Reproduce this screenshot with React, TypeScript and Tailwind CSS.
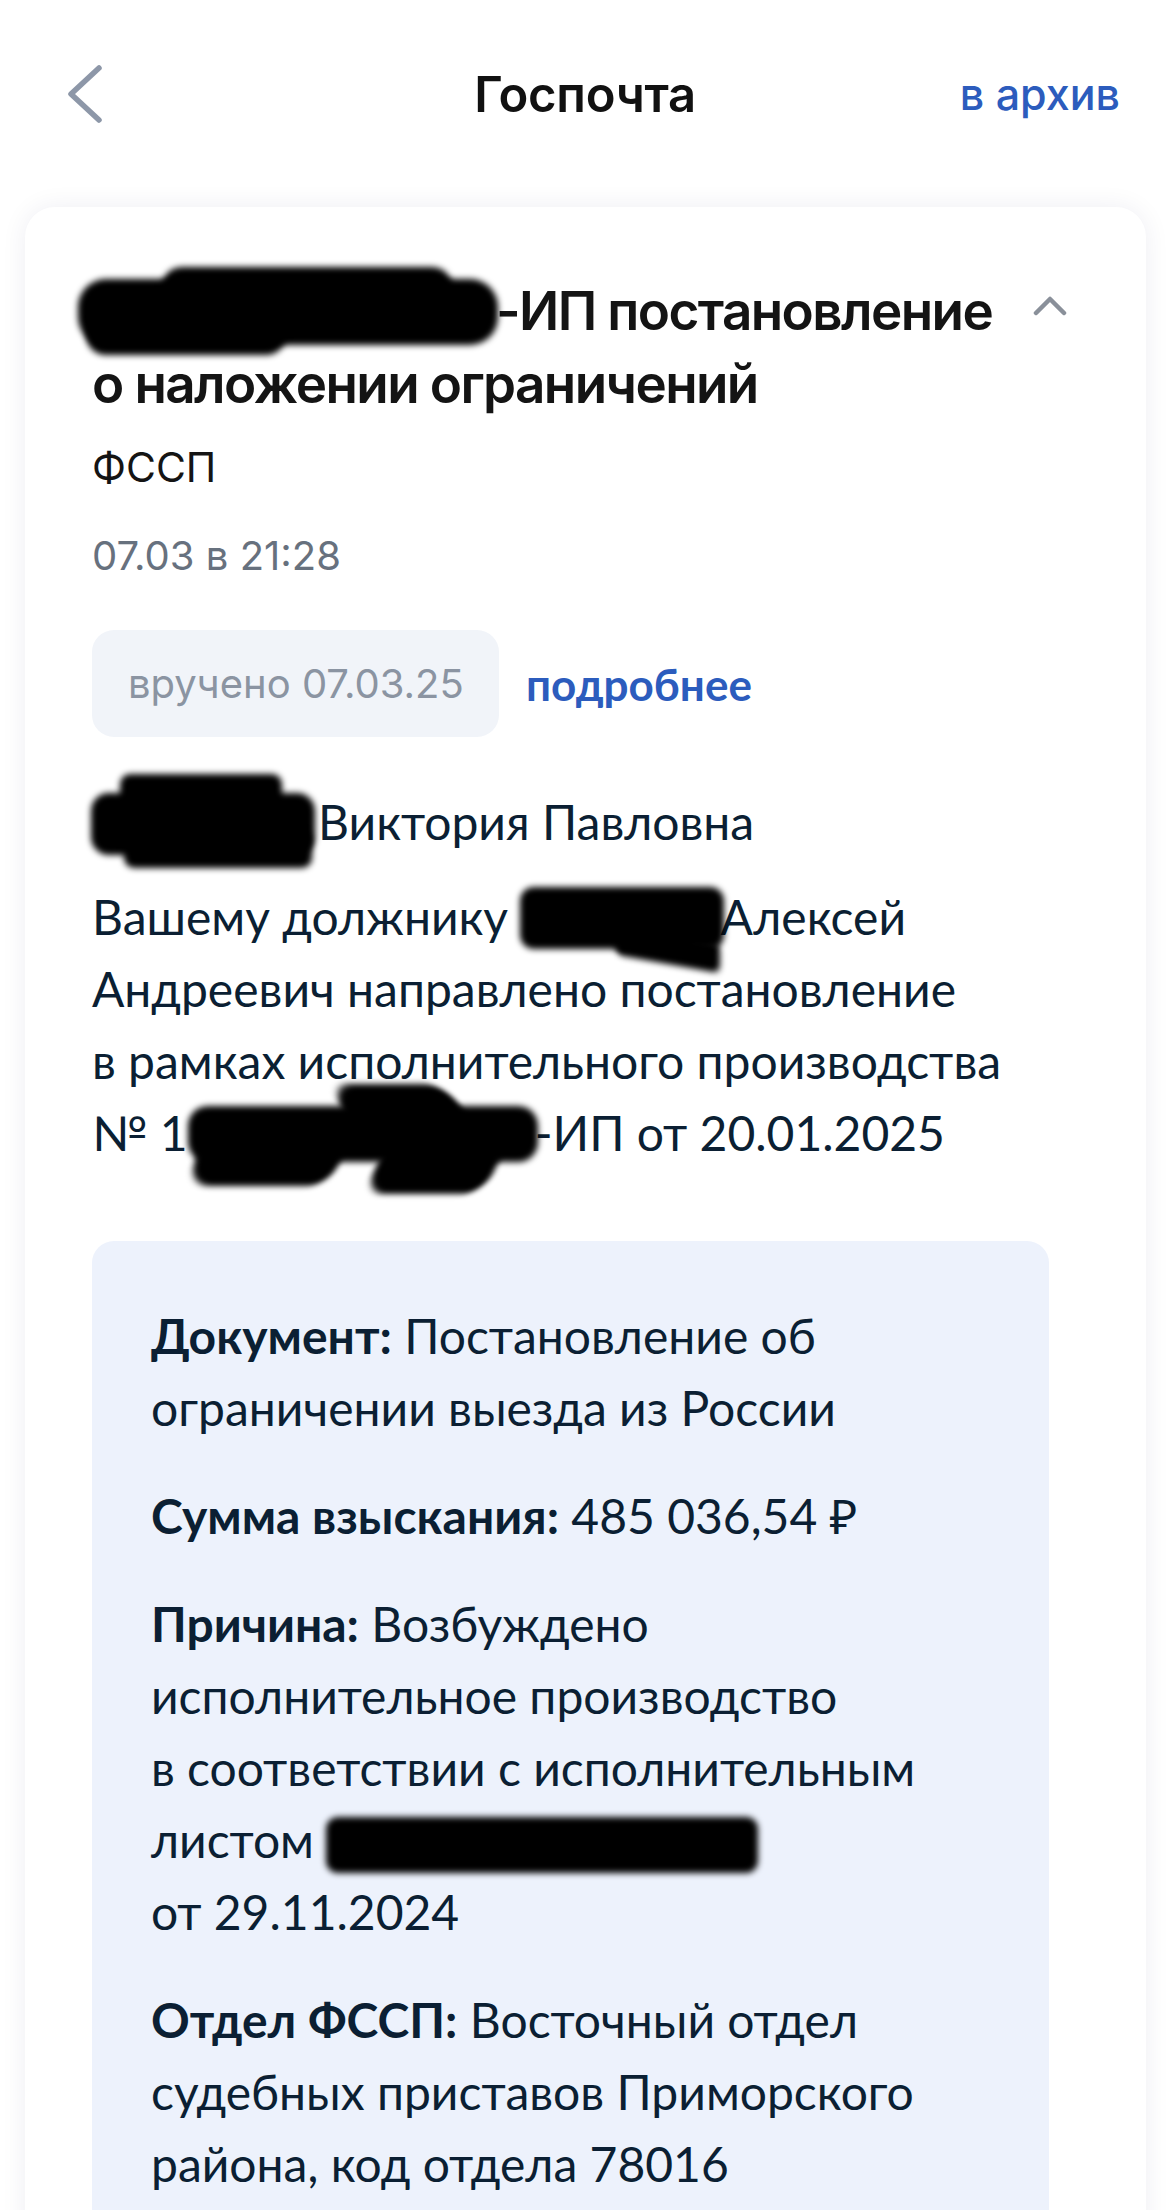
import React from "react";

const SF = { fontFamily: "Inter, 'Noto Sans', sans-serif" };
const LATO = { fontFamily: "Lato, 'Noto Sans', sans-serif" };

function Ink({ className }: { className: string }) {
  return <span className={"absolute bg-black blur-[3px] " + className} />;
}

export default function App() {
  return (
    <div className="min-h-[2210px] w-[1170px] bg-white overflow-hidden">
      {/* header */}
      <div className="grid h-[188px] grid-cols-[1fr_auto_1fr] items-center" style={SF}>
        <div className="pl-[64px]">
          <svg width="42" height="60" viewBox="0 0 42 60" fill="none">
            <path d="M35 4 L7 30 L35 56" stroke="#8d97a8" strokeWidth="5.5" strokeLinecap="round" strokeLinejoin="round" />
          </svg>
        </div>
        <div className="text-[49px] font-semibold leading-none text-[#111111] tracking-[-0.3px]">Госпочта</div>
        <div className="justify-self-end pr-[50px] text-[43px] font-medium leading-none text-[#2c5cbd]">в архив</div>
      </div>

      {/* card */}
      <div className="ml-[25px] mr-[24px] mt-[19px] rounded-[30px] bg-white px-[67px] pt-[68px] pb-[200px] shadow-[0_0_26px_rgba(20,35,80,0.07)]">
        {/* title row */}
        <div className="flex items-start justify-between" style={SF}>
          <h1 className="whitespace-nowrap text-[53px] font-semibold leading-[73px] tracking-[-1.6px] text-[#141414]">
            <span className="relative inline-block h-[1px] w-[404px] align-baseline">
              <Ink className="left-[-14px] top-[-50px] h-[66px] w-[420px] rounded-[28px]" />
              <Ink className="left-[70px] top-[-62px] h-[40px] w-[290px] rounded-full" />
              <Ink className="left-[-6px] top-[-14px] h-[40px] w-[200px] rounded-full" />
            </span>
            -ИП постановление
            <br />о наложении ограничений
          </h1>
          <svg className="mr-[12px] mt-[20px] shrink-0" width="34" height="22" viewBox="0 0 34 22" fill="none">
            <path d="M3 18 L17 4 L31 18" stroke="#8a909a" strokeWidth="4.5" strokeLinecap="round" strokeLinejoin="round" />
          </svg>
        </div>

        <div className="mt-[20px] text-[41px] leading-[52px] text-[#141414]" style={SF}>ФССП</div>
        <div className="mt-[37px] text-[40px] leading-[52px] text-[#67717e]" style={SF}>07.03 в 21:28</div>

        {/* badge row */}
        <div className="mt-[48px] flex items-center gap-[27px]">
          <div className="flex h-[107px] w-[407px] items-center rounded-[22px] bg-[#f1f4f9] pl-[36px] text-[40px] leading-[52px] text-[#8b94a2]" style={SF}>
            вручено 07.03.25
          </div>
          <div className="text-[44px] font-bold leading-[52px] text-[#2c5cbd]" style={LATO}>подробнее</div>
        </div>

        {/* body */}
        <div className="text-[48px] leading-[72px] text-[#0b1f33]" style={LATO}>
          <p className="mt-[49px]">
            <span className="relative inline-block h-[1px] w-[226px] align-baseline">
              <Ink className="left-[28px] top-[-65px] h-[42px] w-[162px] rounded-[10px]" />
              <Ink className="left-[-1px] top-[-46px] h-[62px] w-[224px] rounded-[18px]" />
              <Ink className="left-[32px] top-[-8px] h-[37px] w-[188px] rounded-[10px]" />
            </span>
            Виктория Павловна
          </p>
          <p className="mt-[23px]">
            Вашему должнику{" "}
            <span className="relative inline-block h-[1px] w-[200px] align-baseline">
              <Ink className="left-[0px] top-[-47px] h-[62px] w-[204px] rounded-[14px]" />
              <Ink className="left-[95px] top-[0px] h-[30px] w-[105px] rounded-[8px] skew-y-[10deg]" />
            </span>
            Алексей
            <br />
            Андреевич направлено постановление
            <br />в&nbsp;рамках исполнительного производства
            <br />№ 1
            <span className="relative inline-block h-[1px] w-[347px] align-baseline">
              <Ink className="left-[0px] top-[-44px] h-[56px] w-[350px] rounded-[20px]" />
              <Ink className="left-[10px] top-[-30px] h-[66px] w-[145px] rounded-[24px] skew-x-[-20deg]" />
              <Ink className="left-[160px] top-[-66px] h-[70px] w-[120px] rounded-[24px] skew-x-[30deg]" />
              <Ink className="left-[188px] top-[-10px] h-[54px] w-[120px] rounded-[22px] skew-x-[-25deg]" />
            </span>
            -ИП от 20.01.2025
          </p>

          {/* info box */}
          <div className="mt-[72px] mr-[30px] rounded-[22px] bg-[#edf2fc] pl-[59px] pr-[30px] pt-[59px] pb-[120px]">
            <p>
              <b className="font-bold">Документ:</b> Постановление об
              <br />
              ограничении выезда из России
            </p>
            <p className="mt-[36px]">
              <b className="font-bold">Сумма взыскания:</b> 485 036,54 ₽
            </p>
            <p className="mt-[36px]">
              <b className="font-bold">Причина:</b> Возбуждено
              <br />
              исполнительное производство
              <br />в&nbsp;соответствии с исполнительным
              <br />
              листом{" "}
              <span className="relative inline-block h-[1px] w-[430px] align-baseline">
                <Ink className="left-[0px] top-[-40px] h-[56px] w-[432px] rounded-[12px]" />
              </span>
              <br />
              от 29.11.2024
            </p>
            <p className="mt-[36px]">
              <b className="font-bold">Отдел ФССП:</b> Восточный отдел
              <br />
              судебных приставов Приморского
              <br />
              района, код отдела 78016
            </p>
          </div>
        </div>
      </div>
    </div>
  );
}
